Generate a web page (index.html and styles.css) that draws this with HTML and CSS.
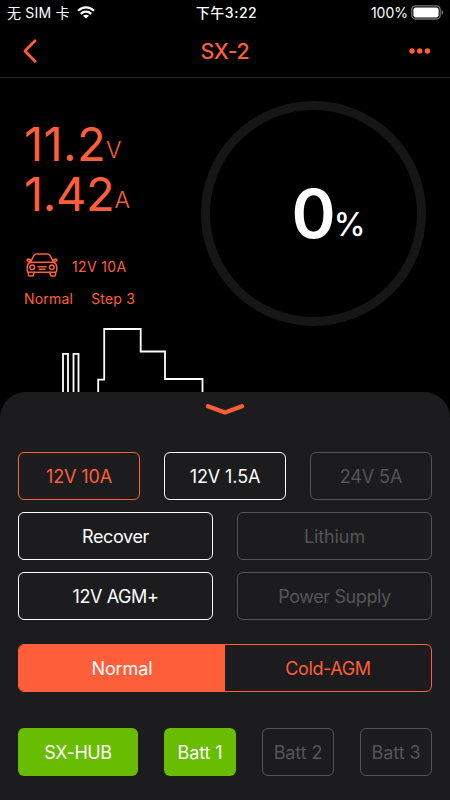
FILE: index.html
```html
<!DOCTYPE html>
<html lang="zh-CN">
<head>
<meta charset="utf-8">
<title>SX-2</title>
<link rel="stylesheet" href="styles.css">
</head>
<body>
<div class="screen">
  <div class="status">
    <div class="carrier"><span class="carrier-name">无 SIM 卡</span>
      <svg class="wifi" width="18" height="13" viewBox="0 0 18 13" fill="none" stroke="#fff" stroke-width="2.3"><path d="M1 4.800C5.500.2 12.500.2 17 4.800"/><path d="M3.800 7.800c3-2.800 7.400-2.800 10.400 0"/><path d="M9 12.600 6 9.800c1.600-1.400 4.400-1.400 6 0z" fill="#fff" stroke="none"/></svg>
    </div>
    <div class="clock">下午3:22</div>
    <div class="power"><span class="power-level">100%</span>
      <svg width="33" height="15" viewBox="0 0 33 15"><rect x=".8" y=".8" width="28.400" height="13.200" rx="3.800" fill="none" stroke="#777" stroke-width="1.300"/><rect x="2.400" y="2.400" width="25.200" height="10" rx="2.200" fill="#fff"/><path d="M30.700 5c2 .8 2 4 0 4.800z" fill="#777"/></svg>
    </div>
  </div>
  <header class="nav">
    <svg class="back" width="14" height="24" viewBox="0 0 14 24" fill="none" stroke="#ff5e3a" stroke-width="2.800" stroke-linecap="round" stroke-linejoin="round"><path d="M12 1.800 2 12l10 10.200"/></svg>
    <h1 class="title">SX-2</h1>
    <svg class="more" width="22" height="6" viewBox="0 0 22 6" fill="#ff5e3a"><circle cx="3" cy="3" r="2.700"/><circle cx="10.700" cy="3" r="2.700"/><circle cx="18.400" cy="3" r="2.700"/></svg>
  </header>
  <main class="monitor">
    <section class="readings">
      <div class="reading volts"><span class="value">11.2</span><span class="unit">V</span></div>
      <div class="reading amps"><span class="value">1.42</span><span class="unit">A</span></div>
      <div class="vehicle">
        <svg width="32" height="24" viewBox="0 0 32 24" fill="none" stroke="#ff5e3a" stroke-width="1.500" stroke-linejoin="round" stroke-linecap="round"><path d="M4.500 9.200 8 2.400Q8.800 1 10.400 1h11.200Q23.200 1 24 2.400l3.500 6.800"/><path d="M4.500 9.200h23c2.100.8 3.200 2.600 3.200 4.500v4.100q0 1.400-1.400 1.400H2.700q-1.400 0-1.400-1.400v-4.100c0-1.900 1.100-3.700 3.200-4.500z"/><path d="M5 7.600Q3.500 5.800 1.700 6.200.5 7 1.500 8l2.800.3M27 7.600q1.500-1.800 3.300-1.400Q31.500 7 30.500 8l-2.800.3"/><circle cx="6.200" cy="14.300" r="2.300"/><circle cx="25.800" cy="14.300" r="2.300"/><path d="M12 13.700h8M13 16.200h6M2.400 19.200v2.500q0 1.300 1.300 1.300h2.500q1 0 1.300-1l.7-2.800M29.600 19.200v2.500q0 1.300-1.300 1.300h-2.500q-1 0-1.300-1l-.7-2.800"/></svg>
        <span class="label">12V 10A</span>
      </div>
      <div class="stage"><span class="label">Normal</span><span class="label">Step 3</span></div>
      <svg class="graph" width="144" height="65" viewBox="0 0 144 65" fill="none" stroke="#fff" stroke-width="1.800"><path d="M3 65V26.800h5V65M13.500 65V26.800h5V65M38.200 65V52.700h6V2h36.500v22.500h24.300v27.500h37.500V65"/></svg>
    </section>
    <section class="dial"><span class="percent">0</span><span class="sign">%</span></section>
  </main>
  <section class="sheet">
    <svg class="handle" width="40" height="14" viewBox="0 0 40 14" fill="none" stroke="#ff5e3a" stroke-width="4.400" stroke-linecap="round" stroke-linejoin="miter"><path d="m3 4.200 17 6.300 17-6.300"/></svg>
    <div class="row three"><button class="btn active">12V 10A</button><button class="btn">12V 1.5A</button><button class="btn off">24V 5A</button></div>
    <div class="row two"><button class="btn tight">Recover</button><button class="btn off">Lithium</button></div>
    <div class="row two"><button class="btn tight">12V AGM+</button><button class="btn off tight">Power Supply</button></div>
    <div class="segments"><button class="segment selected">Normal</button><button class="segment tight">Cold-AGM</button></div>
    <div class="row hub"><button class="btn on tight">SX-HUB</button><button class="btn on">Batt 1</button><button class="btn off">Batt 2</button><button class="btn off">Batt 3</button></div>
  </section>
</div>
</body>
</html>
```
FILE: styles.css
```css
* { box-sizing: border-box; }
body {
  margin: 0;
  background: #000;
  color: #fff;
  font-family: Inter, "Noto Sans CJK SC", sans-serif;
}
.screen {
  width: 450px;
  height: 800px;
  display: flex;
  flex-direction: column;
  overflow: hidden;
}
.status {
  height: 24px;
  padding: 1px 6px 0 7px;
  display: grid;
  grid-template-columns: 1fr auto 1fr;
  align-items: center;
  font-size: 14px;
  line-height: 23px;
  white-space: nowrap;
}
.carrier, .power { display: flex; align-items: center; }
.carrier { gap: 7px; }
.carrier-name { letter-spacing: .2px; }
.power { justify-content: flex-end; gap: 3px; }
.clock { font-weight: 500; letter-spacing: .5px; padding-left: 2px; }
.nav {
  height: 54px;
  padding: 0 19px 0 23px;
  border-bottom: 1px solid #222;
  display: grid;
  grid-template-columns: 1fr auto 1fr;
  align-items: center;
  color: #ff5e3a;
}
.more { justify-self: end; }
.title { margin: 0 4px 0 0; font-size: 21.5px; line-height: 28px; font-weight: 500; letter-spacing: -.4px; }
.monitor {
  height: 314px;
  flex: none;
  display: flex;
  justify-content: space-between;
  padding-right: 24px;
  color: #ff5e3a;
}
.readings { width: 177px; flex: none; padding-left: 24px; display: flex; flex-direction: column; }
.reading {
  height: 50px;
  line-height: 50px;
  white-space: nowrap;
  display: flex;
  align-items: baseline;
}
.volts { margin-top: 41px; }
.value { font-size: 47px; line-height: 50px; letter-spacing: .4px; }
.amps .value { letter-spacing: -.3px; }
.unit { font-size: 23px; line-height: 28px; font-weight: 300; transform: translateY(-3px); }
.vehicle { height: 24px; margin: 34px 0 0 2px; display: flex; align-items: center; gap: 14px; }
.label { font-size: 14px; line-height: 20px; letter-spacing: .2px; }
.vehicle .label { padding-top: 3px; letter-spacing: .35px; }
.stage { margin-top: 12px; display: flex; gap: 18px; height: 20px; }
.graph { margin: 18px 0 0 36px; flex: none; }
.dial {
  width: 225px;
  height: 225px;
  flex: none;
  margin-top: 23px;
  border: 9.5px solid #161616;
  border-radius: 50%;
  display: flex;
  justify-content: center;
  align-items: baseline;
  padding: 64px 0 0 30px;
  color: #fff;
}
.percent { font-size: 67px; line-height: 80px; font-weight: 600; letter-spacing: -2px; }
.sign { font-size: 32px; font-weight: 500; transform: translateY(-2px); }
.sheet {
  flex: 1;
  background: #1c1c1e;
  border-radius: 26px 26px 0 0;
  padding: 10px 18px 24px;
  display: flex;
  flex-direction: column;
}
.handle { align-self: center; margin-bottom: 36px; flex: none; }
.row { display: grid; margin-bottom: 12px; }
.three { grid-template-columns: repeat(3, 122px); justify-content: space-between; }
.two { grid-template-columns: 195px 195px; justify-content: space-between; }
.hub { grid-template-columns: 120px 72px 72px 72px; justify-content: space-between; margin: 36px 0 0; }
.btn, .segment {
  height: 48px;
  padding: 2px 0 0;
  font: 400 18px/44px Inter, sans-serif;
  letter-spacing: -.1px;
  white-space: nowrap;
  color: #fff;
  background: transparent;
}
.btn { border: 1.5px solid #fff; border-radius: 6px; }
.btn.active { color: #ff5e3a; border-color: #ff5e3a; }
.btn.off { color: #555; border: 1px solid #555; }
.btn.on { background: #68bd00; border: 0; }
.btn.tight, .segment.tight { letter-spacing: -.4px; }
.segments {
  height: 48px;
  margin-top: 12px;
  display: grid;
  grid-template-columns: 1fr 1fr;
  border: 1px solid #ff5e3a;
  border-radius: 6px;
  overflow: hidden;
}
.segment { height: 46px; border: 0; color: #ff5e3a; }
.segment.selected { background: #ff5e3a; color: #fff; }
```
